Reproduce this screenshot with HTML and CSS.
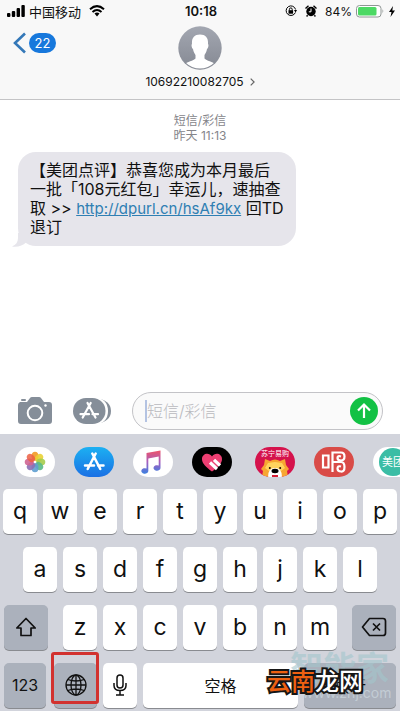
FILE: index.html
```html
<!DOCTYPE html>
<html lang="zh-CN">
<head>
<meta charset="utf-8">
<meta name="viewport" content="width=device-width, initial-scale=1">
<title>短信/彩信</title>
<link rel="stylesheet" href="styles.css">
</head>
<body>
<header class="top">
  <div class="status">
    <div class="status-side">
      <svg width="18" height="12" viewBox="0 0 18 12"><rect x="0" y="8" width="3.4" height="4" rx="1"/><rect x="4.8" y="6" width="3.4" height="6" rx="1"/><rect x="9.6" y="3" width="3.4" height="9" rx="1"/><rect x="14.4" y="0" width="3.4" height="12" rx="1"/></svg>
      <span class="carrier">中国移动</span>
      <svg class="wifi" width="16" height="12" viewBox="0 0 16 12"><g fill="none" stroke="#000" stroke-width="2"><path d="M1 4.2Q8-2 15 4.2"/><path d="M3.5 7Q8 3 12.500 7"/></g><path d="M5.500 8.600Q8 6.500 10.500 8.600L8 11.500Z"/></svg>
    </div>
    <strong class="clock">10:18</strong>
    <div class="status-side status-right">
      <svg width="12" height="12" viewBox="0 0 12 12"><path d="M10.400 7.500A4.800 4.800 0 1 1 10.600 4.500" fill="none" stroke="#000"/><path d="M9 5h3L10.600 7.500Z"/><rect x="3.500" y="5.200" width="4.600" height="3.500"/><path d="M4.400 5.500V4.300a1.400 1.400 0 0 1 2.800 0V5.500" fill="none" stroke="#000"/></svg>
      <svg class="alarm" width="12" height="12" viewBox="0 0 12 12"><circle cx="6" cy="6.500" r="4.700"/><path d="M.5 3.500 3.500.8M11.500 3.500 8.500.8M2.600 10.300 1.600 11.500M9.400 10.300l1 1.200" stroke="#000" stroke-width="1.400"/><path d="M6 3.500V6.800H3.800" fill="none" stroke="#fff"/></svg>
      <span class="percent">84%</span>
      <svg width="29" height="13" viewBox="0 0 29 13"><rect x=".5" y=".5" width="24.500" height="11.500" rx="3" fill="#fff" stroke="#8f9694"/><rect x="2" y="2" width="18.500" height="8.500" rx="1.500" fill="#4cd964"/><path d="M26.500 4v4.500q1.800-2.200 0-4.500" fill="#8f9694"/></svg>
      <svg width="6" height="11" viewBox="0 0 6 11"><path d="M4 0 0 6h2.500L1.500 11 6 4.500H3.300Z"/></svg>
    </div>
  </div>
  <div class="contact">
    <button class="back" aria-label="返回">
      <svg width="14" height="22" viewBox="0 0 14 22"><path d="M12 1.500 2 11l10 9.500" fill="none" stroke="#3478b8" stroke-width="2.600"/></svg>
      <span class="badge">22</span>
    </button>
    <button class="person">
      <svg width="44" height="44" viewBox="0 0 44 44"><defs><linearGradient id="av" x2="0" y2="1"><stop stop-color="#a3a7b1"/><stop offset="1" stop-color="#858993"/></linearGradient><clipPath id="avc"><circle cx="22" cy="22" r="20.500"/></clipPath></defs><circle cx="22" cy="22" r="21.700" fill="url(#av)"/><path clip-path="url(#avc)" fill="#fff" d="M22 8.500c-6 0-8.500 4-8 9.500-1 1-.2 4 1 5 .5 3 1.500 4.500 2.500 6v3.500c-2 2.500-8 3-12 6V44h33v-5.500c-4-3-10-3.500-12-6V29c1-1.500 2-3 2.500-6 1.200-1 2-4 1-5 .5-5.500-2-9.500-8-9.500Z"/></svg>
      <span class="number">10692210082705 <svg width="5" height="8" viewBox="0 0 5 8"><path d="m.7.600 3.400 3.400-3.400 3.400" fill="none" stroke="#666" stroke-width="1.200"/></svg></span>
    </button>
  </div>
</header>

<main class="thread">
  <p class="stamp">短信/彩信<br>昨天 11:13</p>
  <div class="bubble">
    <p>【美团点评】恭喜您成为本月最后<br>一批「108元红包」幸运儿，速抽查<br>取 &gt;&gt; <a href="#">http://dpurl.cn/hsAf9kx</a> 回TD<br>退订</p>
    <svg class="tail" width="18" height="14" viewBox="0 0 18 14"><path d="M6 0v5c0 4-2 7-6 8.500 6 .8 11-1 14-4L18 0Z" fill="#e6e5eb"/></svg>
  </div>
</main>

<form class="compose">
  <button type="button" aria-label="相机">
    <svg width="36" height="28" viewBox="0 0 36 28"><path fill="#858e99" d="M3 5h7l3-4q.6-1 2-1h7q1.400 0 2 1l3 4h5q3 0 3 3v16q0 3-3 3H4q-3 0-3-3V8q0-2 2-3Z"/><rect x="4" y="2" width="5" height="2" rx="1" fill="#858e99"/><circle cx="18" cy="16" r="7.300" fill="none" stroke="#fff" stroke-width="2"/><circle cx="28.500" cy="8.500" r="1.200" fill="#fff"/></svg>
  </button>
  <button type="button" class="store" aria-label="应用">
    <svg width="39" height="28" viewBox="0 0 39 28"><path d="M22 1q16 2 16 13T22 27Z" fill="#858e99"/><path d="M20 0q15 1 15 14T20 28Z" fill="#fff"/><rect x="0" y="1" width="32.500" height="26" rx="13" fill="#858e99"/><g stroke="#fff" stroke-width="2.200" stroke-linecap="round"><path d="m17.700 6-8 14.500M14.500 6l8 14.500M7.500 17.200h8.500M19.500 17.200h5.500"/></g></svg>
  </button>
  <div class="field">
    <input type="text" aria-label="短信/彩信" placeholder="短信/彩信">
    <button type="submit" class="send" aria-label="发送">
      <svg width="28" height="28" viewBox="0 0 28 28"><circle cx="14" cy="14" r="14" fill="#12c144"/><path d="M14 21V7.500M8 13.500l6-6 6 6" fill="none" stroke="#fff" stroke-width="2.200"/></svg>
    </button>
  </div>
</form>

<section class="keyboard">
  <nav class="apps">
    <button class="app" aria-label="照片"><svg width="40" height="30" viewBox="0 0 40 30"><g transform="translate(20 15)"><g><ellipse cy="-5.700" rx="3.500" ry="4.600" fill="#f3a33a"/><ellipse cy="-5.700" rx="3.500" ry="4.600" fill="#e9d235" fill-opacity=".9" transform="rotate(45)"/><ellipse cy="-5.700" rx="3.500" ry="4.600" fill="#a5cc4d" fill-opacity=".9" transform="rotate(90)"/><ellipse cy="-5.700" rx="3.500" ry="4.600" fill="#59b987" fill-opacity=".9" transform="rotate(135)"/><ellipse cy="-5.700" rx="3.500" ry="4.600" fill="#5f9ed0" fill-opacity=".9" transform="rotate(180)"/><ellipse cy="-5.700" rx="3.500" ry="4.600" fill="#8b6fb5" fill-opacity=".9" transform="rotate(225)"/><ellipse cy="-5.700" rx="3.500" ry="4.600" fill="#cf6592" fill-opacity=".9" transform="rotate(270)"/><ellipse cy="-5.700" rx="3.500" ry="4.600" fill="#ec5f43" fill-opacity=".85" transform="rotate(315)"/></g><circle r="1.300" fill="#fff"/></g></svg></button>
    <button class="app app-store" aria-label="App Store"><svg width="40" height="30" viewBox="0 0 40 30"><g stroke="#fff" stroke-width="2.500" stroke-linecap="round"><path d="m21.700 6.500-8 15.500M18.300 6.500l8 15.500M11 18.500h9M24 18.500h5.500"/></g></svg></button>
    <button class="app" aria-label="音乐"><svg width="40" height="30" viewBox="0 0 40 30"><defs><linearGradient id="mu" x2="0" y2="1"><stop stop-color="#ee5369"/><stop offset=".5" stop-color="#a45fc0"/><stop offset="1" stop-color="#3c80e0"/></linearGradient></defs><path fill="url(#mu)" d="m13.500 6 14-2.500V21a3.500 2.800 0 1 1-1.800-2.500V9.500l-10.400 2V24a3.500 2.800 0 1 1-1.800-2.500Z"/></svg></button>
    <button class="app app-black" aria-label="Digital Touch"><svg width="40" height="30" viewBox="0 0 40 30"><path fill="#ed3f72" d="M20 24.500C14 20 10 16.500 10 12.200 10 6.500 17 5 20 9.500 23 5 30 6.500 30 12.200c0 4.300-4 7.800-10 12.300Z"/><path d="m18 15.500 7 6.500M22 12.800l6 5.700" stroke="#fff" stroke-width="3.200"/></svg></button>
    <span class="divider"></span>
    <button class="app app-suning"><span class="brand">苏宁易购</span><svg width="40" height="18" viewBox="0 0 40 18"><path fill="#f7a632" d="m10 0 5 2q5-3 10 0l5-2 1 6 3 4-2 2 1 6H7l1-6-2-2 3-4Z"/><path fill="#ffd45d" d="m13 4 7-1 7 1 3 5-4 3-6-3-6 3-4-3Z"/><path fill="#fff" d="M13 18q0-9 7-9t7 9Z"/><ellipse cx="20" cy="12" rx="3.500" ry="2.200"/><path d="M14.800 8v2M25.200 8v2" stroke="#3a2110" stroke-width="1.700"/><path d="M17 16h6v2h-6Z" fill="#d61c35"/></svg></button>
    <button class="app app-sing" aria-label="唱"><svg width="40" height="30" viewBox="0 0 40 30"><g fill="none" stroke="#fff" stroke-width="2.200"><path d="M9 8.500h5.500v12H9Z"/><path d="M18.500 25V5.500H27q3.500 0 3.500 4T27 13.500q-3.500 0-3.500-2.500t3.500-1.500"/><path d="M18.500 15H27q3.500 0 3.500 5T27 24.500q-3.500 0-3.500-3t3.500-2"/></g></svg></button>
    <button class="app"><span class="meituan">美团</span></button>
  </nav>
  <div class="row"><button>q</button><button>w</button><button>e</button><button>r</button><button>t</button><button>y</button><button>u</button><button>i</button><button>o</button><button>p</button></div>
  <div class="row row-home"><button>a</button><button>s</button><button>d</button><button>f</button><button>g</button><button>h</button><button>j</button><button>k</button><button>l</button></div>
  <div class="row row-lower">
    <button class="dark side" aria-label="Shift"><svg width="22" height="20" viewBox="0 0 22 20"><path d="M11 1.500 1.800 11H6v7.500h10V11h4.200Z" fill="none" stroke="#111" stroke-width="1.700" stroke-linejoin="round"/></svg></button>
    <div class="letters"><button>z</button><button>x</button><button>c</button><button>v</button><button>b</button><button>n</button><button>m</button></div>
    <button class="dark side" aria-label="删除"><svg width="26" height="20" viewBox="0 0 26 20"><path d="M8.500 1.500H22q2.500 0 2.500 2.500v12q0 2.500-2.500 2.500H8.500L1.500 10Z" fill="none" stroke="#111" stroke-width="1.700" stroke-linejoin="round"/><path d="m12 6.500 7 7M19 6.500l-7 7" stroke="#111" stroke-width="1.700"/></svg></button>
  </div>
  <div class="row row-bottom">
    <button class="dark numbers">123</button>
    <div class="globe">
      <button class="dark" aria-label="切换键盘"><svg width="22" height="22" viewBox="0 0 22 22"><g fill="none" stroke="#111" stroke-width="1.300"><circle cx="11" cy="11" r="10"/><ellipse cx="11" cy="11" rx="5" ry="10"/><path d="M11 1v20M1 11h20M2.800 5.500q8.200 3 16.400 0M2.800 16.500q8.200-3 16.400 0"/></g></svg></button>
      <span class="highlight"></span>
    </div>
    <button class="mic" aria-label="听写"><svg width="14" height="22" viewBox="0 0 14 22"><g fill="none" stroke="#111" stroke-width="1.500"><rect x="4" y="1" width="6" height="13" rx="3"/><path d="M1 9v2.500q0 5 6 5t6-5V9M7 16.500V21M3 21h8"/></g></svg></button>
    <button class="space">空格</button>
    <div class="return">
      <button class="dark">换行</button>
      <div class="watermark"><b>智能家</b><span>www.znj.com</span></div>
      <div class="logo"><span>云南</span>龙网</div>
    </div>
  </div>
</section>
</body>
</html>
```
FILE: styles.css
```css
* { box-sizing: border-box; }

body {
  margin: 0;
  min-height: 100vh;
  display: flex;
  flex-direction: column;
  background: #fff;
  color: #111;
  font-family: Inter, "Noto Sans CJK SC", sans-serif;
}

button {
  margin: 0;
  padding: 0;
  border: 0;
  background: none;
  color: inherit;
  font: inherit;
}

svg { display: block; flex: none; }
p { margin: 0; }

/* Header */
.top {
  height: 100px;
  background: #f8f8f8;
  border-bottom: 1px solid #c4c4c6;
}

.status {
  display: flex;
  align-items: center;
  height: 22px;
  padding: 0 5px 0 7px;
  font-size: 13px;
}

.status-side {
  flex: 1;
  display: flex;
  align-items: center;
  gap: 4px;
}

.status-right { justify-content: flex-end; }
.wifi { margin-left: 4px; }
.alarm { margin: 0 4px; }
.percent { font-size: 12px; }
.clock { font-size: 13px; font-weight: 600; }

.contact {
  display: grid;
  grid-template-columns: 1fr auto 1fr;
  align-items: start;
  padding-top: 4px;
}

.back {
  display: flex;
  align-items: center;
  gap: 2px;
  padding: 6px 0 0 13px;
}

.badge {
  width: 27px;
  border-radius: 10px;
  background: #1778dc;
  color: #fff;
  font-size: 13px;
  line-height: 20px;
}

.person {
  display: flex;
  flex-direction: column;
  align-items: center;
  gap: 4px;
}

.number {
  display: flex;
  align-items: center;
  gap: 6px;
  font-size: 12px;
  line-height: 16px;
}

/* Thread */
.thread {
  flex: 1;
  padding: 13px 18px;
}

.stamp {
  color: #85858a;
  font-size: 12px;
  line-height: 15px;
  text-align: center;
}

.bubble {
  position: relative;
  width: fit-content;
  margin-top: 9px;
  padding: 9px 12px;
  border-radius: 18px;
  background: #e6e5eb;
  font-size: 16px;
  line-height: 19px;
  white-space: nowrap;
}

.bubble a { color: #2f7fb3; font-size: 15px; }
.tail { position: absolute; left: -6px; bottom: -1px; }

/* Compose bar */
.compose {
  display: flex;
  align-items: center;
  gap: 20px;
  padding: 0 17px 4px;
}

.field {
  flex: 1;
  min-width: 0;
  display: flex;
  align-items: center;
  height: 38px;
  padding: 0 4px 0 12px;
  border: 1px solid #c3c3c7;
  border-radius: 19px;
  background: #fafafa;
}

.field input {
  flex: 1;
  width: 100%;
  min-width: 0;
  height: 22px;
  padding: 0;
  border: 0;
  border-left: 2px solid #b4c3e2;
  outline: 0;
  background: none;
  font: inherit;
  font-size: 16px;
}

.field input::placeholder { color: #b9b9be; font-weight: 300; }

/* Keyboard */
.keyboard {
  padding: 0 3px 3px;
  background: #d2d4dc;
}

.apps {
  display: flex;
  align-items: center;
  height: 55px;
  gap: 19px;
  margin-right: -3px;
  padding-left: 12px;
  overflow: hidden;
}

.app {
  flex: none;
  width: 40px;
  height: 30px;
  border-radius: 15px;
  background: #fff;
  overflow: hidden;
}

.app-store { background: linear-gradient(#1cb0f2, #1a70e4); }
.app-black { background: #000; }
.app-sing { background: #d94b47; }

.app-suning {
  display: flex;
  flex-direction: column;
  justify-content: flex-end;
  background: #d5124c;
}

.brand {
  align-self: center;
  color: #fff;
  font-size: 7px;
  line-height: 10px;
}

.divider {
  width: 1px;
  height: 27px;
  margin: 0 -7px 0 -8px;
  background: #b9bbc3;
}

.meituan {
  display: block;
  width: 28px;
  margin-left: 6px;
  border-radius: 14px;
  background: #3bbda5;
  color: #fff;
  font-size: 11px;
  line-height: 28px;
}

.row, .letters { display: flex; gap: 6px; }
.row { margin-bottom: 13px; }

.row button {
  flex: 1;
  display: flex;
  align-items: center;
  justify-content: center;
  height: 45px;
  padding-bottom: 2px;
  border-radius: 5px;
  background: #fff;
  box-shadow: 0 1px 0 #898b90;
  font-size: 23px;
}

.row .dark { background: #abb1bc; }
.row-home { padding: 0 20px; }
.row-lower { gap: 15px; padding: 0 1px; }
.row-lower .side { flex: 0 0 44px; }
.letters { flex: 1; }

.row-bottom {
  margin-bottom: 0;
  padding: 0 1px;
}

.row .numbers { flex: 0 0 42px; margin-right: 2px; font-size: 16px; }
.row .mic { flex: 0 0 34px; }
.row .space { font-size: 16px; }

.globe, .return { position: relative; }
.globe { flex: 0 0 43px; }
.return { flex: 0 0 92px; }
.globe button, .return button { width: 100%; }
.row .return button { font-size: 16px; }

.highlight {
  position: absolute;
  inset: -11px -2px 4px -3px;
  border: 3px solid #d2322f;
  border-radius: 3px;
}

.watermark {
  position: absolute;
  left: -14px;
  top: -12px;
  color: #a3c6cc;
  opacity: .6;
  white-space: nowrap;
}

.watermark b {
  display: block;
  font-size: 33px;
  line-height: 34px;
}

.watermark span {
  display: block;
  padding-left: 12px;
  color: #d3dfe5;
  font-size: 14px;
  line-height: 16px;
}

.logo {
  position: absolute;
  left: -37px;
  top: 3px;
  color: #fff;
  font-size: 24px;
  font-weight: 500;
  line-height: 32px;
  white-space: nowrap;
  -webkit-text-stroke: 4px #161616;
  paint-order: stroke fill;
}

.logo span { color: #ee6011; }
```
